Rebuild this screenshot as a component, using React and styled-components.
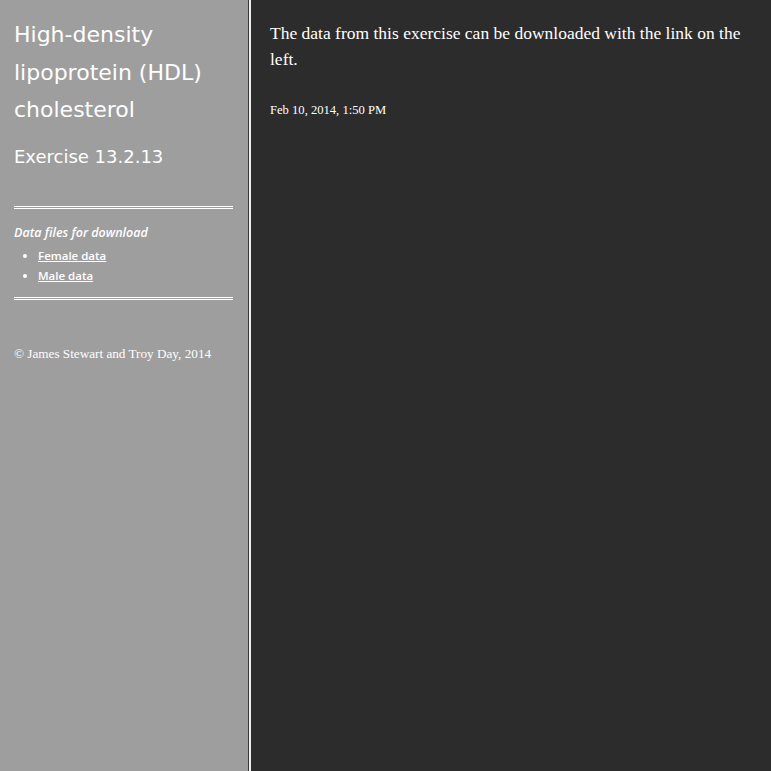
import React from "react";
import styled, { createGlobalStyle } from "styled-components";

const Global = createGlobalStyle`
  html, body { margin: 0; padding: 0; height: 100%; }
  body { background: #2c2c2c; }
  #root { height: 100%; }
`;

const Page = styled.div`
  display: flex;
  min-height: 771px;
  height: 100%;
`;

const Sidebar = styled.aside`
  width: 249px;
  flex-shrink: 0;
  box-sizing: border-box;
  background: #9e9e9e;
  border-right: 1px solid #3a3a3a;
  padding: 16px 15px 0 14px;
  color: #fff;
  font-family: "DejaVu Sans", sans-serif;
`;

const Title = styled.h1`
  margin: 0;
  font-weight: normal;
  font-size: 22px;
  line-height: 37.5px;
`;

const Subtitle = styled.h2`
  margin: 14px 0 0;
  font-weight: normal;
  font-size: 18px;
  line-height: 28px;
`;

const Rule = styled.hr`
  margin: ${(p) => p.$top}px 0 0;
  border: none;
  border-top: 3px double #fff;
  height: 0;
`;

const SectionLabel = styled.div`
  margin-top: 16px;
  font-family: "Open Sans", sans-serif;
  font-weight: 600;
  font-size: 12.5px;
  font-style: italic;
  line-height: 16px;
`;

const List = styled.ul`
  margin: 5px 0 0;
  padding-left: 24px;
  font-size: 12px;
  line-height: 19px;
`;

const Item = styled.li`
  &::marker { font-size: 13px; }
`;

const Link = styled.a`
  color: #fff;
  font-family: "Open Sans", sans-serif;
  font-size: 11.5px;
  font-weight: 600;
  text-decoration: underline;
`;

const Copyright = styled.p`
  margin: 46px 0 0;
  font-family: "Liberation Serif", serif;
  font-size: 13.2px;
  line-height: 16px;
  white-space: nowrap;
`;

const Main = styled.main`
  flex: 1;
  background: #2c2c2c;
  border-left: 2px solid #eeeeee;
  padding: 20px 20px 0 19px;
  color: #fff;
  font-family: "Liberation Serif", serif;
`;

const Lead = styled.p`
  margin: 0;
  font-size: 17.5px;
  line-height: 26px;
`;

const Stamp = styled.p`
  margin: 30px 0 0;
  font-size: 12.6px;
  line-height: 16px;
`;

export default function App() {
  return (
    <>
      <Global />
      <Page>
        <Sidebar>
          <Title>High-density lipoprotein (HDL) cholesterol</Title>
          <Subtitle>Exercise 13.2.13</Subtitle>
          <Rule $top={35} />
          <SectionLabel>Data files for download</SectionLabel>
          <List>
            <Item><Link href="#">Female data</Link></Item>
            <Item><Link href="#">Male data</Link></Item>
          </List>
          <Rule $top={11} />
          <Copyright>© James Stewart and Troy Day, 2014</Copyright>
        </Sidebar>
        <Main>
          <Lead>The data from this exercise can be downloaded with the link on the left.</Lead>
          <Stamp>Feb 10, 2014, 1:50 PM</Stamp>
        </Main>
      </Page>
    </>
  );
}
